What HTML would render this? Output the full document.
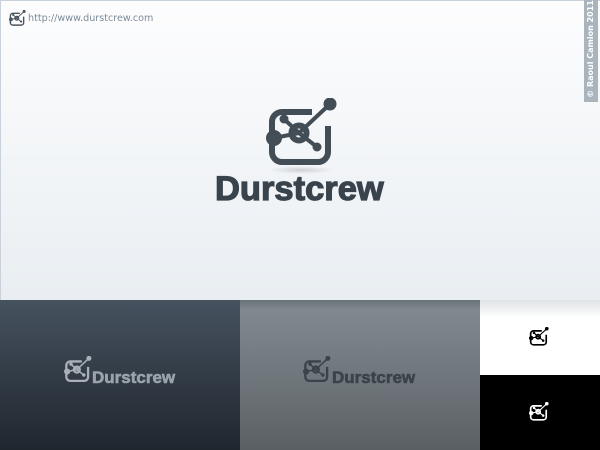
<!DOCTYPE html>
<html><head><meta charset="utf-8"><style>
*{margin:0;padding:0}
body{width:600px;height:450px;overflow:hidden;position:relative;font-family:"Liberation Sans",sans-serif}
.top{position:absolute;left:0;top:0;width:600px;height:300px;background:linear-gradient(#fdfdfe,#e9eef2);border-left:1px solid #c9d2da;border-top:1px solid #c9d2da;box-sizing:border-box}
.p{position:absolute;top:300px;height:150px}
.p1{left:0;width:240px;background:linear-gradient(#46525f,#1f262e)}
.p2{left:240px;width:240px;background:linear-gradient(#6a7378 0,#7f898f 10px,#6c7378 60%,#5a5f63)}
.p3{left:480px;width:120px;height:75px;background:linear-gradient(#dfe3e6,#fff 18px)}
.p4{left:480px;top:375px;width:120px;height:75px;background:#000}
.lg{position:absolute;font-weight:bold;font-family:"Liberation Sans",sans-serif}
svg{position:absolute}
</style></head><body>
<svg width="0" height="0" style="position:absolute"><defs>
<g id="ic">
<path d="M46,14 H16 A10,10 0 0 0 6,24 V54 A10 10 0 0 0 16,64 H52 A10 10 0 0 0 62,54 V28" fill="none" stroke="currentColor" stroke-width="6"/>
<path d="M33,35 L64,6 M33,35 L8,40 M33,35 L18,21 M33,35 L51,49" stroke="currentColor" stroke-width="4" fill="none"/>
<circle cx="33" cy="35" r="7.5" fill="none" stroke="currentColor" stroke-width="6"/>
<circle cx="8" cy="40" r="8" fill="currentColor"/>
<circle cx="64" cy="6" r="6.5" fill="currentColor"/>
<circle cx="18" cy="21" r="4.5" fill="currentColor"/>
<circle cx="51" cy="49" r="4.5" fill="currentColor"/>
</g></defs></svg>
<div class="top"></div>
<svg style="left:9px;top:10px;color:#4a545d" width="17" height="17" viewBox="0 0 72 72"><use href="#ic"/></svg>
<div style="position:absolute;left:28px;top:13px;font-family:'DejaVu Sans',sans-serif;font-size:9.6px;color:#7d8c9b">http://www.durstcrew.com</div>
<div style="position:absolute;left:584px;top:0;width:14px;height:102px;background:#a9b4bd"></div>
<div style="position:absolute;left:584px;top:100px;width:102px;height:14px;transform-origin:0 0;transform:rotate(-90deg);color:#fff;font-size:8px;font-weight:bold;line-height:14px;text-align:center;font-family:'DejaVu Sans',sans-serif">© Raoul Camion 2011</div>
<div style="position:absolute;left:268px;top:166px;width:66px;height:8px;border-radius:50%;background:radial-gradient(rgba(0,0,0,.15),rgba(0,0,0,0) 70%)"></div>
<svg style="left:266px;top:98px;color:#434d55" width="72" height="72" viewBox="0 0 72 72"><use href="#ic"/></svg>
<div class="lg" style="left:215px;top:170px;font-size:34.5px;color:#38434c;-webkit-text-stroke:1.2px #38434c">Durstcrew</div>
<div class="p p1"></div>
<div class="p p2"></div>
<div class="p p3"></div>
<div class="p p4"></div>
<svg style="left:64px;top:356px;color:#a9b0b7" width="28" height="28" viewBox="0 0 72 72"><use href="#ic"/></svg>
<div class="lg" style="left:92px;top:368px;font-size:17px;color:#9aa2aa;-webkit-text-stroke:.6px #9aa2aa">Durstcrew</div>
<svg style="left:303px;top:356px;color:#3b4349" width="28" height="28" viewBox="0 0 72 72"><use href="#ic"/></svg>
<div class="lg" style="left:332px;top:368px;font-size:17px;color:#3b4349;-webkit-text-stroke:.6px #3b4349">Durstcrew</div>
<svg style="left:529px;top:327px;color:#000" width="20" height="20" viewBox="0 0 72 72"><use href="#ic"/></svg>
<svg style="left:529px;top:402px;color:#fff" width="20" height="20" viewBox="0 0 72 72"><use href="#ic"/></svg>
</body></html>
